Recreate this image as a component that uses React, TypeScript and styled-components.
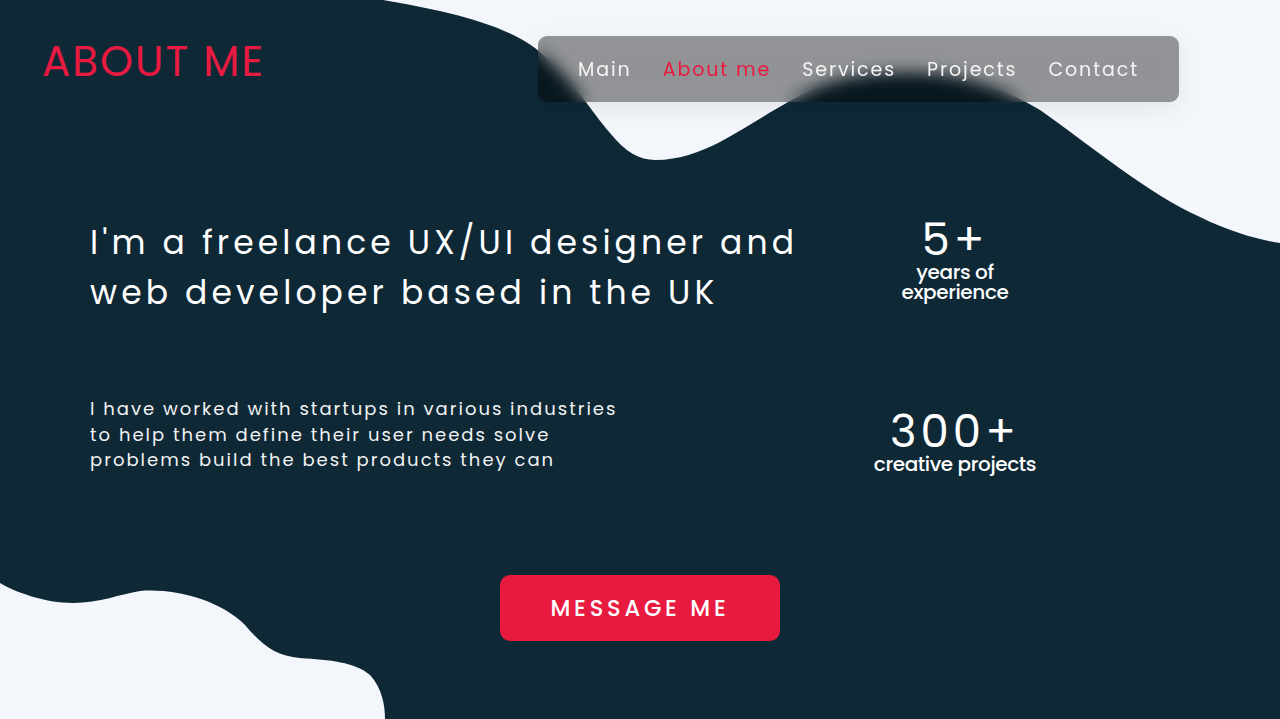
import React from "react";
import styled, { createGlobalStyle } from "styled-components";

const GlobalStyle = createGlobalStyle`
  html, body { margin: 0; padding: 0; background: #0e2836; overflow: hidden; }
  * { box-sizing: border-box; }
`;

const FONT = `Poppins, "Open Sans", "Noto Sans", sans-serif`;

const Page = styled.div`
  position: relative;
  width: 1280px;
  height: 719px;
  overflow: hidden;
  background: #0e2836;
  font-family: ${FONT};
  color: #ffffff;
`;

const Backdrop = styled.svg`
  position: absolute;
  inset: 0;
  width: 1280px;
  height: 719px;
  z-index: 0;
`;

const Content = styled.div`
  position: relative;
  z-index: 1;
  display: flex;
  flex-direction: column;
  height: 100%;
`;

const Header = styled.header`
  display: flex;
  justify-content: space-between;
  align-items: flex-start;
  padding: 36px 101px 0 42px;
`;

const Title = styled.h1`
  margin: 0;
  padding-top: 2px;
  font-family: ${FONT};
  font-weight: 400;
  font-size: 42px;
  line-height: 48px;
  letter-spacing: 2px;
  color: #e81a3f;
`;

const Nav = styled.nav`
  display: flex;
  align-items: center;
  justify-content: space-between;
  width: 641px;
  height: 66px;
  padding: 0 40px;
  border-radius: 9px;
  background: rgba(0, 0, 0, 0.4);
  backdrop-filter: blur(8px);
  -webkit-backdrop-filter: blur(8px);
  box-shadow: 0 6px 24px rgba(20, 30, 50, 0.08);
`;

const NavLink = styled.a<{ $active?: boolean }>`
  font-size: 19px;
  letter-spacing: 1.9px;
  font-weight: 400;
  color: ${(p) => (p.$active ? "#e81a3f" : "#f4f4f4")};
  text-decoration: none;
  cursor: pointer;
`;

const Main = styled.main`
  display: grid;
  grid-template-columns: 760px 210px;
  grid-template-rows: auto auto;
  padding-left: 90px;
`;

const Headline = styled.h2`
  margin: 0;
  padding-top: 116px;
  font-family: ${FONT};
  font-weight: 400;
  font-size: 33px;
  line-height: 50px;
  letter-spacing: 4.1px;
  white-space: nowrap;
`;

const Paragraph = styled.p`
  margin: 0;
  padding-top: 78px;
  font-size: 18px;
  line-height: 25.5px;
  letter-spacing: 2px;
  white-space: nowrap;
  color: #f2f2f2;
`;

const Stat = styled.div<{ $top: number }>`
  display: flex;
  flex-direction: column;
  align-items: center;
  padding-top: ${(p) => p.$top}px;
`;

const StatNumber = styled.div`
  font-size: 45px;
  line-height: 44px;
  font-weight: 400;
  letter-spacing: 4px;
`;

const StatLabel = styled.div`
  font-size: 20px;
  line-height: 20px;
  font-weight: 500;
  letter-spacing: -0.4px;
  text-align: center;
`;

const ButtonRow = styled.div`
  display: flex;
  justify-content: center;
  padding-top: 101px;
`;

const MessageButton = styled.button`
  width: 280px;
  height: 66px;
  border: none;
  border-radius: 10px;
  background: #e81a3f;
  color: #ffffff;
  font-family: ${FONT};
  font-size: 22.5px;
  font-weight: 500;
  letter-spacing: 3.8px;
  cursor: pointer;
`;

export default function App() {
  return (
    <Page>
      <GlobalStyle />
      <Backdrop viewBox="0 0 1280 719" aria-hidden="true">
        <path
          fill="#f3f6fa"
          d="M383,0 C440,10 500,22 535,48 C570,75 590,110 610,133 C625,152 640,160 655,160 C680,160 700,152 720,142 C760,120 790,98 825,84 C860,72 900,70 940,74 C980,80 1010,92 1040,110 C1090,145 1150,195 1200,217 C1230,232 1260,240 1280,243 L1280,0 Z"
        />
        <path
          fill="#f3f6fa"
          d="M0,583 C15,592 45,603 73,603 C100,603 120,594 140,591 C175,588 220,600 245,625 C262,645 275,656 300,658 C330,660 355,662 370,675 C382,688 385,705 385,719 L0,719 Z"
        />
      </Backdrop>
      <Content>
        <Header>
          <Title>ABOUT ME</Title>
          <Nav>
            <NavLink>Main</NavLink>
            <NavLink $active>About me</NavLink>
            <NavLink>Services</NavLink>
            <NavLink>Projects</NavLink>
            <NavLink>Contact</NavLink>
          </Nav>
        </Header>
        <Main>
          <Headline>
            I'm a freelance UX/UI designer and
            <br />
            web developer based in the UK
          </Headline>
          <Stat $top={116}>
            <StatNumber>5+</StatNumber>
            <StatLabel>
              years of
              <br />
              experience
            </StatLabel>
          </Stat>
          <Paragraph>
            I have worked with startups in various industries
            <br />
            to help them define their user needs solve
            <br />
            problems build the best products they can
          </Paragraph>
          <Stat $top={92}>
            <StatNumber>300+</StatNumber>
            <StatLabel>creative projects</StatLabel>
          </Stat>
        </Main>
        <ButtonRow>
          <MessageButton>MESSAGE ME</MessageButton>
        </ButtonRow>
      </Content>
    </Page>
  );
}
